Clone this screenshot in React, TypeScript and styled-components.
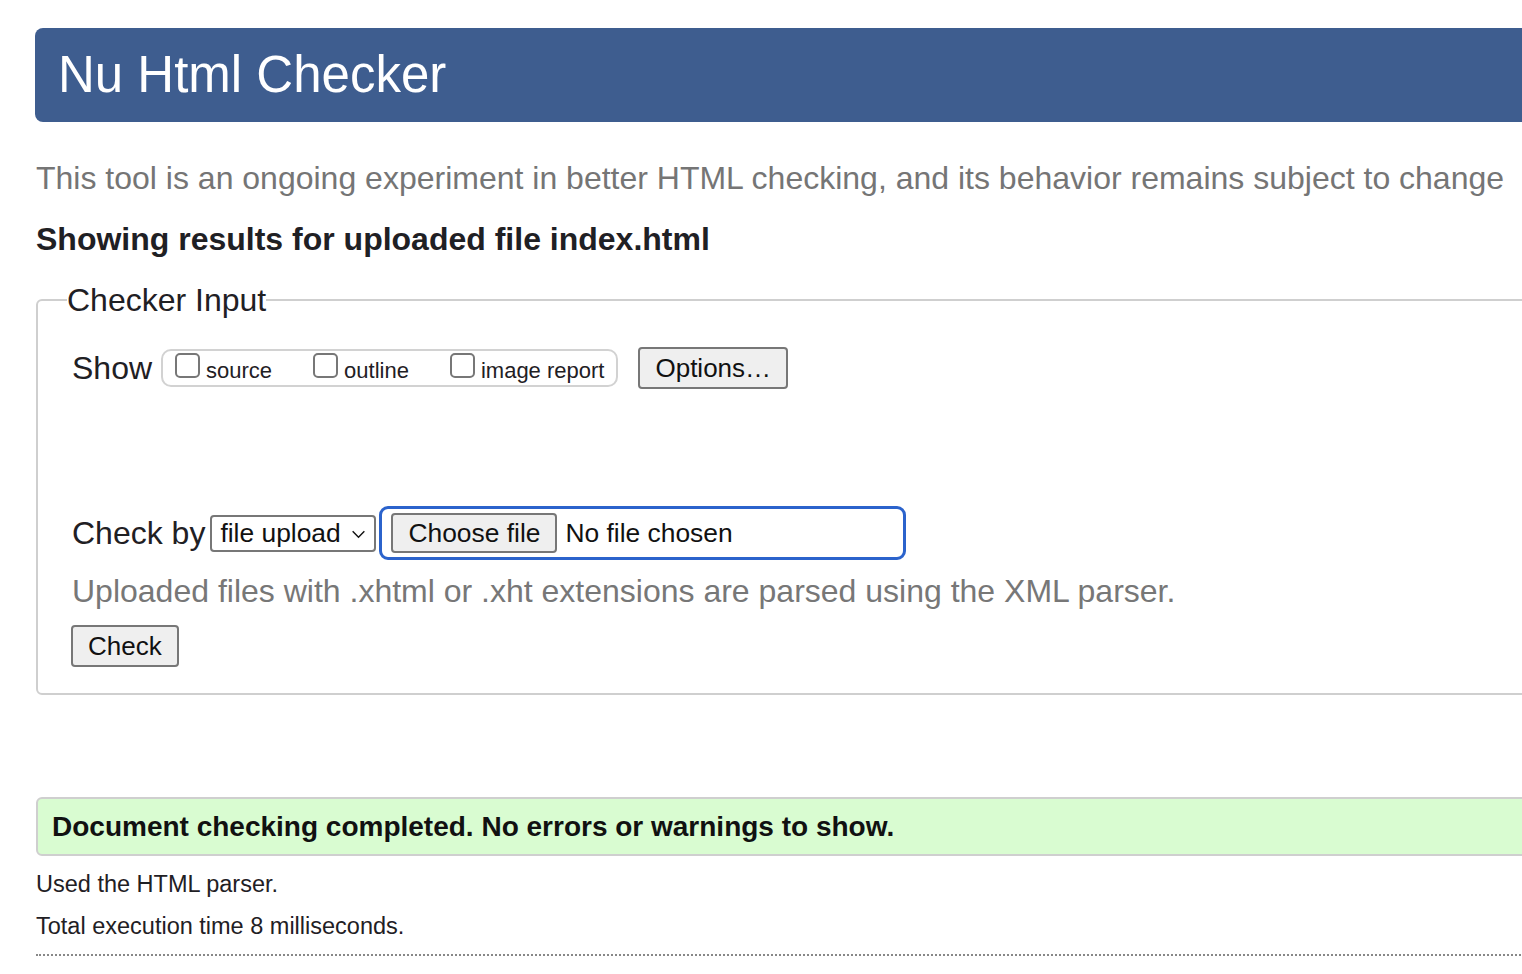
import { createGlobalStyle } from 'styled-components'
import styled from 'styled-components'

const GlobalStyle = createGlobalStyle`
  html, body {
    margin: 0;
    padding: 0;
    background: #fff;
    overflow: hidden;
  }
  body {
    font-family: "Liberation Sans", Arial, Helvetica, sans-serif;
    color: #1f2024;
  }
`

function Checkbox({ label }: { label: string }) {
  return (
    <CheckLabel>
      <CheckBox type="checkbox" />
      {label}
    </CheckLabel>
  )
}

function App() {
  return (
    <Page>
      <GlobalStyle />
      <Header>Nu Html Checker</Header>
      <Intro>
        This tool is an ongoing experiment in better HTML checking, and its behavior remains subject to change
      </Intro>
      <ResultsTitle>Showing results for uploaded file index.html</ResultsTitle>

      <InputFieldset>
        <Legend>Checker Input</Legend>
        <ShowRow>
          <RowLabel>Show</RowLabel>
          <OptionGroup>
            <Checkbox label="source" />
            <Checkbox label="outline" />
            <Checkbox label="image report" />
          </OptionGroup>
          <Button $ml={20}>Options…</Button>
        </ShowRow>

        <CheckByRow>
          <RowLabel>Check by</RowLabel>
          <SelectWrap>
            <Select defaultValue="file">
              <option value="address">address</option>
              <option value="file">file upload</option>
              <option value="text">text input</option>
            </Select>
            <Chevron viewBox="0 0 16 10" aria-hidden="true">
              <path d="M1.5 1.5 L8 8 L14.5 1.5" fill="none" stroke="#111" strokeWidth="1.6" />
            </Chevron>
          </SelectWrap>
          <FileBox>
            <FileButton>Choose file</FileButton>
            <FileName>No file chosen</FileName>
          </FileBox>
        </CheckByRow>

        <Hint>Uploaded files with .xhtml or .xht extensions are parsed using the XML parser.</Hint>
        <Button $ml={-1}>Check</Button>
      </InputFieldset>

      <Success>Document checking completed. No errors or warnings to show.</Success>
      <Detail>Used the HTML parser.</Detail>
      <Detail>Total execution time 8 milliseconds.</Detail>
      <Rule />
    </Page>
  )
}

const Page = styled.div`
  width: 1600px;
  padding: 28px 0 0 35px;
  box-sizing: border-box;
`

const Header = styled.h1`
  margin: 0;
  height: 94px;
  line-height: 94px;
  padding-left: 23px;
  background: #3e5d8f;
  color: #fff;
  font-size: 51px;
  font-weight: 400;
  border-radius: 8px;
`

const Intro = styled.p`
  margin: 36px 0 0 1px;
  font-size: 32px;
  line-height: 40px;
  color: #757575;
`

const ResultsTitle = styled.h2`
  margin: 21px 0 0 1px;
  font-size: 32px;
  line-height: 40px;
  font-weight: 700;
  color: #1f2024;
`

const InputFieldset = styled.fieldset`
  margin: 21px 0 0 1px;
  padding: 24px 0 26px 34px;
  border: 2px solid #cfcfcf;
  border-radius: 6px;
  min-width: 0;
`

const Legend = styled.legend`
  padding: 0;
  margin-left: -5px;
  font-size: 32px;
  line-height: 40px;
  color: #1f2024;
`

const Row = styled.div`
  display: flex;
  align-items: center;
`

const ShowRow = styled(Row)`
  margin-top: 3px;
`

const CheckByRow = styled(Row)`
  margin-top: 117px;
`

const RowLabel = styled.span`
  font-size: 32px;
  line-height: 40px;
  color: #1f2024;
  margin-right: 9px;
`

const OptionGroup = styled.div`
  display: flex;
  align-items: center;
  gap: 41px;
  height: 38px;
  box-sizing: border-box;
  padding: 0 12px 0 12px;
  border: 2px solid #d2d2d2;
  border-radius: 10px;
`

const CheckLabel = styled.label`
  display: flex;
  align-items: center;
  gap: 6px;
  font-size: 22px;
  color: #1f2024;
  line-height: 26px;
  padding-top: 6px;
`

const CheckBox = styled.input`
  appearance: none;
  margin: 0;
  width: 25px;
  height: 25px;
  border: 2px solid #777;
  border-radius: 5px;
  background: #fff;
  position: relative;
  top: -6px;
`

const Button = styled.button<{ $ml?: number }>`
  margin: 0 0 0 ${(p) => p.$ml ?? 0}px;
  height: 42px;
  padding: 0 15px;
  font-family: inherit;
  font-size: 26px;
  color: #111;
  background: #efefef;
  border: 2px solid #777;
  border-radius: 4px;
`

const SelectWrap = styled.div`
  position: relative;
  margin-left: -4px;
`

const Select = styled.select`
  appearance: none;
  display: block;
  width: 166px;
  height: 37px;
  padding: 0 0 0 8px;
  font-family: inherit;
  font-size: 26.4px;
  color: #111;
  background: #fff;
  border: 2px solid #777;
  border-radius: 4px;
`

const Chevron = styled.svg`
  position: absolute;
  right: 10px;
  top: 15px;
  width: 15px;
  height: 9px;
  pointer-events: none;
`

const FileBox = styled.div`
  margin-left: 3px;
  width: 527px;
  height: 54px;
  box-sizing: border-box;
  display: flex;
  align-items: center;
  padding-left: 9px;
  border: 3px solid #2b63cc;
  border-radius: 9px;
`

const FileButton = styled.span`
  display: inline-flex;
  align-items: center;
  height: 40px;
  box-sizing: border-box;
  padding: 0 15px;
  font-size: 26.4px;
  color: #111;
  background: #efefef;
  border: 2px solid #777;
  border-radius: 4px;
`

const FileName = styled.span`
  margin-left: 8px;
  font-size: 26.4px;
  color: #111;
`

const Hint = styled.p`
  margin: 11px 0 14px 0;
  font-size: 32px;
  line-height: 40px;
  color: #777;
`

const Success = styled.div`
  margin: 102px 0 0 1px;
  height: 59px;
  box-sizing: border-box;
  display: flex;
  align-items: center;
  padding-left: 14px;
  background: #d9fcd1;
  border: 2px solid #cfcfcf;
  border-radius: 6px;
  font-size: 28px;
  font-weight: 700;
  color: #111;
`

const Detail = styled.p`
  margin: 14px 0 0 1px;
  font-size: 23.5px;
  line-height: 28px;
  color: #1f2024;
`

const Rule = styled.div`
  margin: 14px 0 0 1px;
  border-bottom: 2px dotted #888;
`

export default App
